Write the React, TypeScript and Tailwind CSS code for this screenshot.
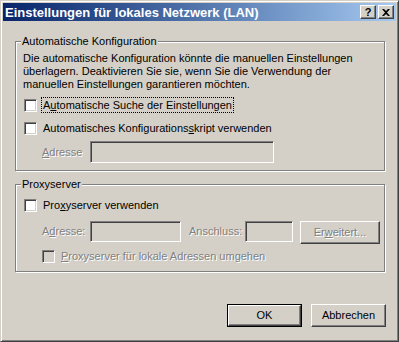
import React from "react";

const raised =
  "border border-t-white border-l-white border-b-[#404040] border-r-[#404040] shadow-[inset_-1px_-1px_0_#808080,inset_1px_1px_0_#d4d0c8]";
const sunken =
  "border border-t-[#808080] border-l-[#808080] border-b-white border-r-white shadow-[inset_1px_1px_0_#404040,inset_-1px_-1px_0_#d4d0c8]";
const dim = "text-[#808080] [text-shadow:1px_1px_0_#fff]";

function Check({ disabled = false }: { disabled?: boolean }) {
  return (
    <span
      className={`block w-[13px] h-[13px] shrink-0 ${sunken} ${disabled ? "bg-[#d4d0c8]" : "bg-white"}`}
    />
  );
}

function Group({ title, children }: { title: string; children: React.ReactNode }) {
  return (
    <fieldset className="ml-[12px] w-[370px] border border-[#808080] shadow-[inset_1px_1px_0_#fff,1px_1px_0_#fff] px-0">
      <legend className="ml-[5px] px-[1px] leading-[13px] bg-[#d4d0c8]">{title}</legend>
      {children}
    </fieldset>
  );
}

function Button({ children, isDefault = false, disabled = false, className = "" }: { children: React.ReactNode; isDefault?: boolean; disabled?: boolean; className?: string }) {
  const inner = (
    <span className={`flex-1 flex items-center justify-center ${raised} ${disabled ? dim : ""}`}>{children}</span>
  );
  return (
    <div className={`flex h-[23px] bg-[#d4d0c8] ${isDefault ? "border border-black" : ""} ${className}`}>{inner}</div>
  );
}

export default function App() {
  return (
    <div
      className="w-[399px] h-[342px] bg-[#d4d0c8] text-black text-[11px] border border-t-[#d4d0c8] border-l-[#d4d0c8] border-b-[#404040] border-r-[#404040] shadow-[inset_1px_1px_0_#fff,inset_-1px_-1px_0_#808080] p-[2px] flex flex-col select-none"
      style={{ fontFamily: '"Liberation Sans", Arial, sans-serif' }}
    >
      {/* title bar */}
      <div className="h-[18px] flex items-center bg-gradient-to-r from-[#0a246a] to-[#a6caf0] pl-[2px] pr-[2px]">
        <span className="flex-1 text-white font-bold text-[13px] leading-none">
          Einstellungen für lokales Netzwerk (LAN)
        </span>
        <div className={`w-[16px] h-[14px] flex items-center justify-center bg-[#d4d0c8] ${raised} font-bold text-[11px] leading-none`}>?</div>
        <div className={`ml-[2px] w-[16px] h-[14px] flex items-center justify-center bg-[#d4d0c8] ${raised}`}>
          <svg width="8" height="7" viewBox="0 0 8 7">
            <path d="M0 0h2l2 2 2-2h2L5 3.5 8 7H6L4 5 2 7H0l3-3.5z" fill="#000" />
          </svg>
        </div>
      </div>

      <div className="mt-[14px]">
        <Group title="Automatische Konfiguration">
          <div className="pl-[7px] pr-[6px] pb-[7px]">
            <p className="mt-[4px] leading-[13px]">
              Die automatische Konfiguration könnte die manuellen Einstellungen überlagern. Deaktivieren Sie sie, wenn Sie die Verwendung der manuellen Einstellungen garantieren möchten.
            </p>
            <div className="mt-[6px] h-[16px] flex items-center pl-[1px]">
              <Check />
              <span className="ml-[4px] px-[1px] border border-dotted border-black leading-[14px]">
                A<u>u</u>tomatische Suche der Einstellungen
              </span>
            </div>
            <div className="mt-[7px] h-[16px] flex items-center pl-[1px]">
              <Check />
              <span className="ml-[5px] px-[1px] leading-[14px]">
                Automatisches Konfigurations<u>s</u>kript verwenden
              </span>
            </div>
            <div className="mt-[5px] flex items-center">
              <span className={`ml-[19px] w-[48px] ${dim}`}>
                <u>A</u>dresse
              </span>
              <div className={`w-[184px] h-[22px] bg-[#d4d0c8] ${sunken}`} />
            </div>
          </div>
        </Group>
      </div>

      <div className="mt-[7px]">
        <Group title="Proxyserver">
          <div className="pl-[7px] pr-[4px] pb-[7px]">
            <div className="mt-[7px] h-[15px] flex items-center pl-[1px]">
              <Check />
              <span className="ml-[5px] px-[1px]">
                Pro<u>x</u>yserver verwenden
              </span>
            </div>
            <div className="mt-[8px] flex items-start">
              <span className={`ml-[19px] w-[48px] h-[21px] flex items-center ${dim}`}>
                A<u>d</u>resse:
              </span>
              <div className={`w-[91px] h-[21px] bg-[#d4d0c8] ${sunken}`} />
              <span className={`ml-[8px] w-[56px] h-[21px] flex items-center ${dim}`}>Anschluss:</span>
              <div className={`w-[48px] h-[21px] bg-[#d4d0c8] ${sunken}`} />
              <Button disabled className="ml-[7px] w-[80px]">
                Er<u>w</u>eitert...
              </Button>
            </div>
            <div className="mt-[5px] h-[15px] flex items-center pl-[19px]">
              <Check disabled />
              <span className={`ml-[5px] px-[1px] ${dim}`}>
                <u>P</u>roxyserver für lokale Adressen umgehen
              </span>
            </div>
          </div>
        </Group>
      </div>

      <div className="mt-[32px] ml-[12px] w-[371px] flex justify-end gap-[9px]">
        <Button isDefault className="w-[75px]">OK</Button>
        <Button className="w-[75px]">Abbrechen</Button>
      </div>
    </div>
  );
}
